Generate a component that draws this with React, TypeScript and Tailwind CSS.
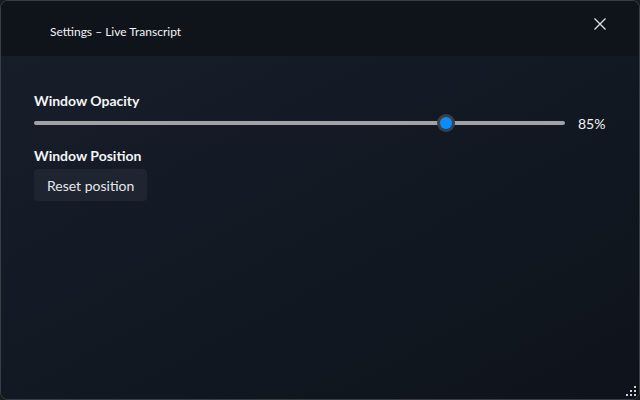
import { useState } from 'react';

export default function App() {
  const [opacity, setOpacity] = useState(85);
  // slider maps 30..100
  const frac = (opacity - 30) / 70;

  return (
    <div className="w-[640px] h-[400px] bg-[#1c1c1c]" style={{ fontFamily: 'Lato, "Noto Sans", sans-serif' }}>
      <div className="relative flex h-full w-full flex-col overflow-hidden rounded-lg border border-[#3a3e45]">
        {/* Title bar */}
        <div className="flex h-[55px] shrink-0 items-start justify-between bg-[#0f131a] pl-[49px] pr-[32px]">
          <span className="mt-[23px] text-[12px] leading-[16px] text-[#f3f4f6]">Settings – Live Transcript</span>
          <button className="mt-[16px] text-[#e5e7eb]">
            <svg width="14" height="14" viewBox="0 0 14 14" fill="none" stroke="currentColor" strokeWidth="1.2">
              <path d="M1.5 1.5l11 11M12.5 1.5l-11 11" />
            </svg>
          </button>
        </div>

        {/* Body */}
        <div className="flex flex-1 flex-col bg-gradient-to-br from-[#171e2a] to-[#0e131b] px-[33px] pt-[34px]">
          <div className="text-[14px] font-bold text-[#f3f4f6]">Window Opacity</div>
          <div className="mt-[2px] flex h-[20px] items-center gap-[13px]">
            <div className="relative h-[18px] flex-1">
              <div className="absolute left-0 right-0 top-[7px] h-[4px] rounded-full bg-[#a0a2a6]" />
              <div
                className="absolute top-0 h-[18px] w-[18px] -translate-x-1/2 rounded-full bg-[#3b4048] p-[3px]"
                style={{ left: `calc(9px + (100% - 18px) * ${frac})` }}
              >
                <div className="h-full w-full rounded-full bg-[#0a8cff]" />
              </div>
              <input
                type="range"
                min={30}
                max={100}
                value={opacity}
                onChange={e => setOpacity(Number(e.target.value))}
                className="absolute inset-0 h-full w-full cursor-pointer opacity-0"
              />
            </div>
            <span className="w-[28px] text-[14px] text-[#f3f4f6]">{opacity}%</span>
          </div>

          <div className="mt-[12px] text-[14px] font-bold text-[#f3f4f6]">Window Position</div>
          <button className="mt-[3px] h-[32px] w-fit rounded-[4px] bg-[#1f2530] px-[13px] text-[14px] text-[#e5e7eb]">
            Reset position
          </button>
        </div>

        {/* Resize grip */}
        <svg className="absolute bottom-[3px] right-[3px]" width="10" height="10" viewBox="0 0 10 10" fill="#d1d5db">
          <rect x="8" y="0" width="2" height="2" />
          <rect x="8" y="4" width="2" height="2" />
          <rect x="4" y="4" width="2" height="2" />
          <rect x="8" y="8" width="2" height="2" />
          <rect x="4" y="8" width="2" height="2" />
          <rect x="0" y="8" width="2" height="2" />
        </svg>
      </div>
    </div>
  );
}
